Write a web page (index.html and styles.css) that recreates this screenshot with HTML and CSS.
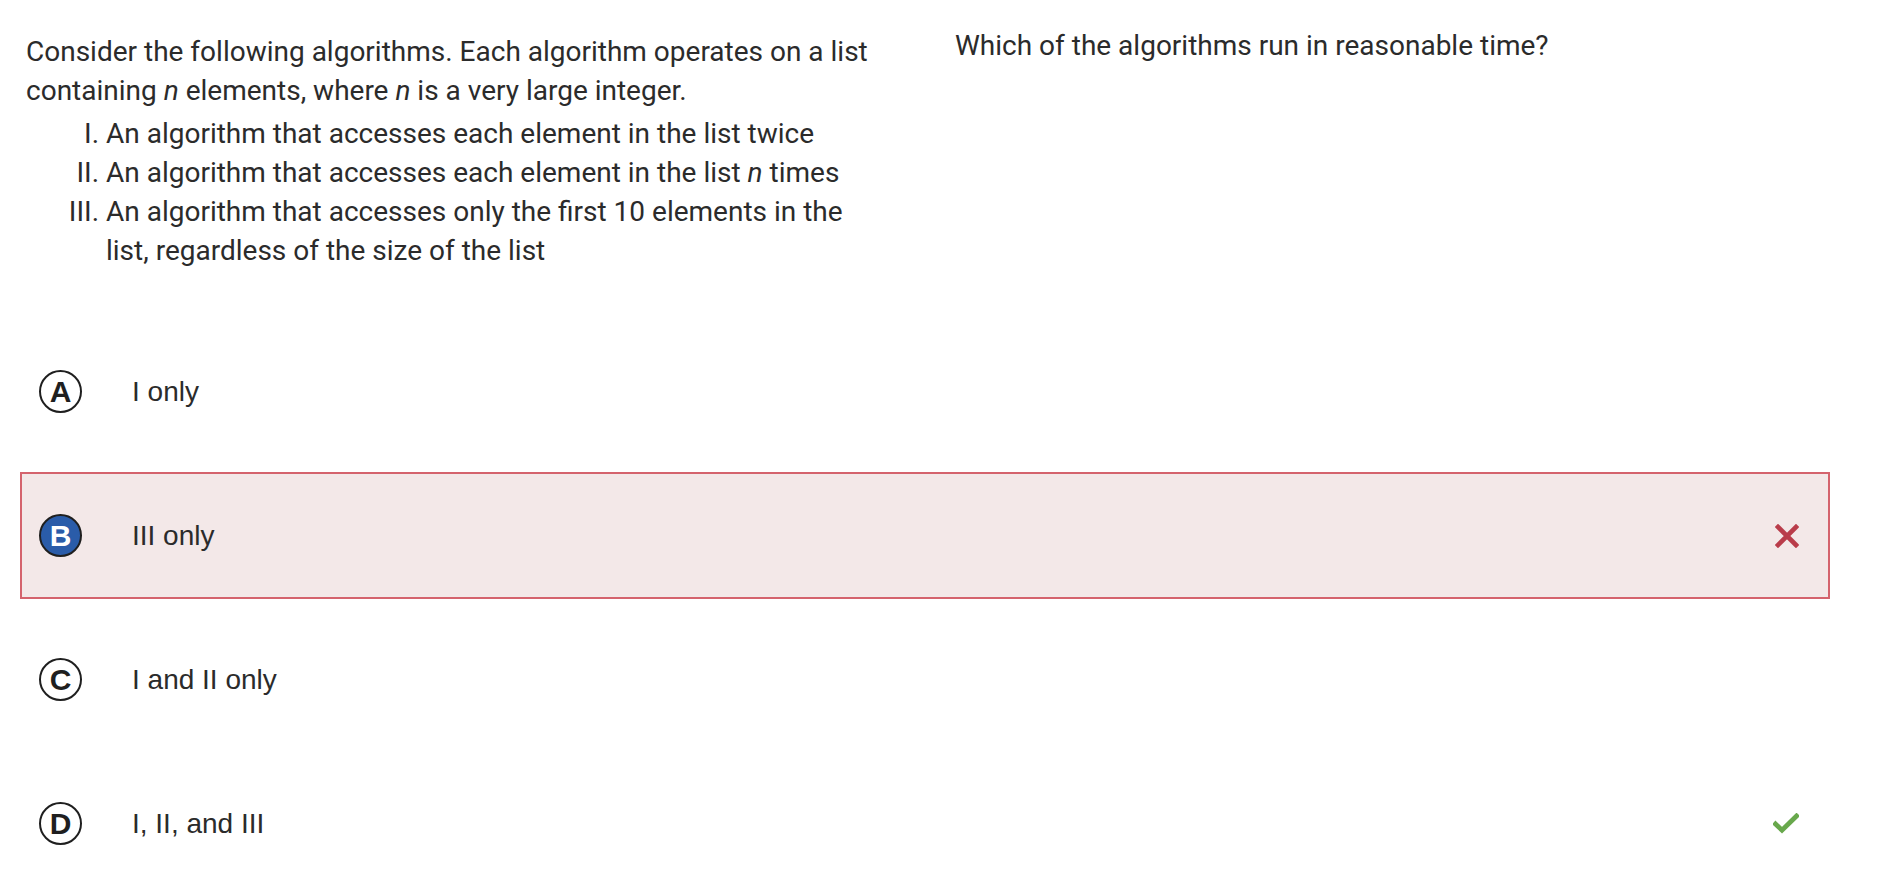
FILE: index.html
```html
<!DOCTYPE html>
<html lang="en">
<head>
<meta charset="utf-8">
<title>Question</title>
<link rel="stylesheet" href="styles.css">
</head>
<body>
<div class="page">
  <section class="question">
    <div class="stimulus">
      <p class="intro">Consider the following algorithms. Each algorithm operates on a list containing <i>n</i> elements, where <i>n</i> is a very large integer.</p>
      <ol class="roman">
        <li>An algorithm that accesses each element in the list twice</li>
        <li>An algorithm that accesses each element in the list <i>n</i> times</li>
        <li>An algorithm that accesses only the first 10 elements in the list, regardless of the size of the list</li>
      </ol>
    </div>
    <div class="stem">
      <p>Which of the algorithms run in reasonable time?</p>
    </div>
  </section>
  <section class="options">
    <div class="option">
      <span class="letter">A</span>
      <span class="answer">I only</span>
    </div>
    <div class="option selected wrong">
      <span class="letter filled">B</span>
      <span class="answer">III only</span>
      <svg class="mark" width="24" height="24" viewBox="0 0 24 24"><path d="M3 3 L21 21 M21 3 L3 21" stroke="#b93c4a" stroke-width="4.6" stroke-linecap="square" fill="none"/></svg>
    </div>
    <div class="option">
      <span class="letter">C</span>
      <span class="answer">I and II only</span>
    </div>
    <div class="option">
      <span class="letter">D</span>
      <span class="answer">I, II, and III</span>
      <svg class="mark" width="26" height="22" viewBox="0 0 26 22"><path d="M2.5 11 L9 17.2 L23.5 3" stroke="#68a84c" stroke-width="4.8" stroke-linecap="square" stroke-linejoin="miter" fill="none"/></svg>
    </div>
  </section>
</div>
</body>
</html>
```
FILE: styles.css
```css
html, body {
  margin: 0;
  padding: 0;
  background: #ffffff;
}

body {
  font-family: Roboto, "Liberation Sans", Arial, sans-serif;
  color: #2b2b2b;
}

.page {
  padding: 26px 0 0 0;
}

.question {
  display: grid;
  grid-template-columns: 955px 1fr;
  font-size: 28px;
  line-height: 39px;
}

.stimulus {
  padding: 6px 75px 0 26px;
}

.intro {
  margin: 0;
}

.roman {
  list-style: upper-roman;
  margin: 4px 0 0 0;
  padding-left: 80px;
}

.stem p {
  margin: 0;
}

.options {
  margin: 58px 62px 0 20px;
  display: flex;
  flex-direction: column;
  gap: 17px;
}

.option {
  display: flex;
  align-items: center;
  height: 127px;
  box-sizing: border-box;
  border: 2px solid transparent;
  padding: 0 29px 0 17px;
  font-family: "Liberation Sans", Arial, sans-serif;
  font-size: 28px;
  color: #2b2b2b;
}

.option.selected.wrong {
  background: #f3e8e8;
  border-color: #d4636d;
}

.letter {
  width: 43px;
  height: 43px;
  box-sizing: border-box;
  border: 2px solid #1f1f1f;
  border-radius: 50%;
  display: flex;
  align-items: center;
  justify-content: center;
  font-weight: bold;
  font-size: 30px;
  line-height: 1;
  color: #1f1f1f;
  flex: none;
}

.letter.filled {
  background: #2a5ca9;
  color: #ffffff;
}

.answer {
  margin-left: 50px;
  flex: 1;
}

.mark {
  flex: none;
}
```
